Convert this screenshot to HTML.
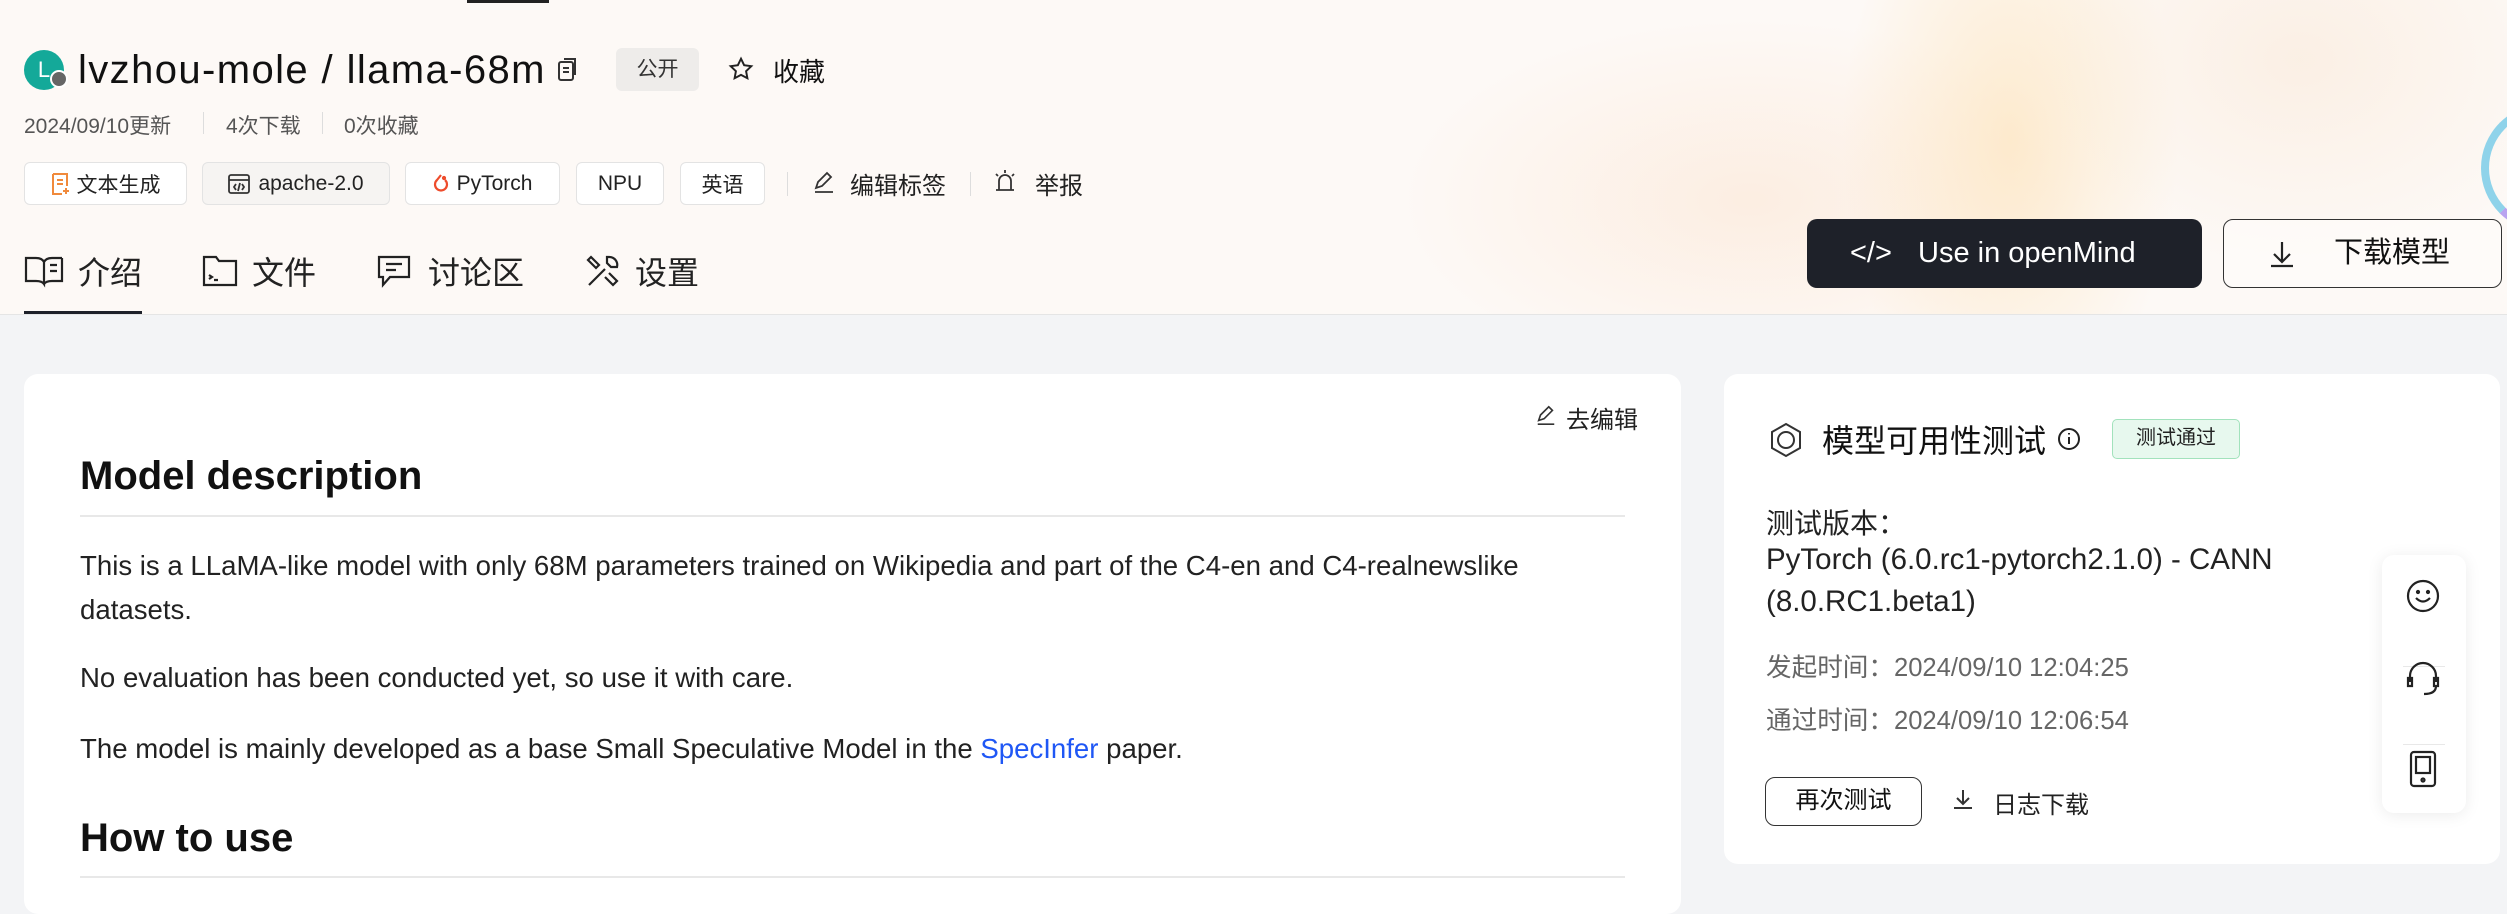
<!DOCTYPE html>
<html><head><meta charset="utf-8">
<style>
*{margin:0;padding:0;box-sizing:border-box}
body{width:2507px;height:890px;overflow:hidden;background:#f3f4f6;font-family:"Liberation Sans","Noto Sans CJK SC",sans-serif;color:#1a1a1a;position:relative}
.a{position:absolute;white-space:nowrap}
#hdr{position:absolute;left:0;top:0;width:2507px;height:315px;border-bottom:1px solid #e5e5e5;
background:
radial-gradient(ellipse 240px 420px at 2010px 140px,rgba(253,225,180,.6),rgba(253,225,180,0) 70%),
radial-gradient(ellipse 500px 260px at 1750px 200px,rgba(252,230,212,.6),rgba(252,230,212,0) 70%),
radial-gradient(ellipse 400px 300px at 2300px 60px,rgba(250,237,224,.8),rgba(250,237,224,0) 70%),
#fdf9f6;overflow:hidden}
.tag{position:absolute;top:162px;height:43px;border:1px solid #e3e3e3;border-radius:6px;background:#fff;font-size:21px;color:#222;display:flex;align-items:center;justify-content:center;gap:8px}
.sep{position:absolute;width:1px;background:#ddd}
.tab{position:absolute;top:248px;font-size:32px;color:#222;display:flex;align-items:center;gap:14px}
.card{position:absolute;background:#fff;border-radius:14px}
p.t{position:absolute;left:80px;font-size:27.6px;color:#222}
</style></head><body>
<div id="hdr">
  <div class="a" style="left:467px;top:0;width:82px;height:3px;background:#222"></div>
  <div class="a" style="left:2481px;top:104px;width:128px;height:128px;border-radius:50%;border:8px solid #8fd3ea;border-right-color:#c0a8f0;border-bottom-color:#b9a3f0"></div>
  <div class="a" style="left:24px;top:50px;width:40px;height:40px;border-radius:50%;background:#14a999;color:#fff;font-size:22px;line-height:40px;text-align:center">L</div>
  <div class="a" style="left:50px;top:70px;width:18px;height:18px;border-radius:50%;background:#666;border:2px solid #fff"></div>
  <div class="a" style="left:78px;top:48px;font-size:40px;color:#111;letter-spacing:1.4px">lvzhou-mole / llama-68m</div>
  <svg class="a" style="left:556px;top:56px" width="24" height="28" viewBox="0 0 24 28" fill="none" stroke="#333" stroke-width="2"><rect x="3" y="6" width="14" height="18" rx="2"/><path d="M8 3h11v16"/><path d="M7 12h6M7 16h6"/></svg>
  <div class="a" style="left:616px;top:48px;width:83px;height:43px;border-radius:6px;background:#eeecea;font-size:21px;line-height:43px;text-align:center;color:#333">公开</div>
  <svg class="a" style="left:728px;top:56px" width="26" height="26" viewBox="0 0 24 24" fill="none" stroke="#222" stroke-width="1.8"><path d="M12 2.5l2.9 6 6.6.9-4.8 4.6 1.2 6.5L12 17.4 6.1 20.5l1.2-6.5L2.5 9.4l6.6-.9z"/></svg>
  <div class="a" style="left:773px;top:52px;font-size:26px;color:#111">收藏</div>
  <div class="a" style="left:24px;top:110px;font-size:21px;color:#555">2024/09/10更新</div>
  <div class="sep" style="left:203px;top:112px;height:22px"></div>
  <div class="a" style="left:226px;top:110px;font-size:21px;color:#555">4次下载</div>
  <div class="sep" style="left:322px;top:112px;height:22px"></div>
  <div class="a" style="left:344px;top:110px;font-size:21px;color:#555">0次收藏</div>

  <div class="tag" style="left:24px;width:163px"><svg width="18" height="24" viewBox="0 0 18 24" fill="none" stroke="#f08a3c" stroke-width="2"><path d="M2 2h14v12M2 2v20h9"/><path d="M6 8h6M6 12h6M12 19h6M15 16v6"/></svg>文本生成</div>
  <div class="tag" style="left:202px;width:188px;background:#f6f4f2"><svg width="22" height="20" viewBox="0 0 22 20" fill="none" stroke="#333" stroke-width="1.8"><rect x="1" y="1" width="20" height="18" rx="2"/><path d="M1 6h20M8 10l-2 3 2 3M14 10l2 3-2 3M12 9l-2 8"/></svg>apache-2.0</div>
  <div class="tag" style="left:405px;width:155px"><svg width="16" height="22" viewBox="0 0 16 22" fill="none" stroke="#ee4c2c" stroke-width="2.2"><path d="M8 2L4 7a6 6 0 1 0 8 0"/><circle cx="11" cy="5" r="1" fill="#ee4c2c"/></svg>PyTorch</div>
  <div class="tag" style="left:576px;width:88px">NPU</div>
  <div class="tag" style="left:680px;width:85px">英语</div>
  <div class="sep" style="left:787px;top:172px;height:24px"></div>
  <svg class="a" style="left:812px;top:170px" width="24" height="24" viewBox="0 0 24 24" fill="none" stroke="#333" stroke-width="1.8"><path d="M4 18l2-6 9-9 4 4-9 9zM3 22h18"/></svg>
  <div class="a" style="left:850px;top:166px;font-size:24px;color:#222">编辑标签</div>
  <div class="sep" style="left:970px;top:172px;height:24px"></div>
  <svg class="a" style="left:993px;top:168px" width="24" height="26" viewBox="0 0 24 26" fill="none" stroke="#333" stroke-width="1.8"><path d="M6 22V13a6 6 0 0 1 12 0v9M3 22h18M12 2v3M3 6l2 2M21 6l-2 2"/></svg>
  <div class="a" style="left:1035px;top:166px;font-size:24px;color:#222">举报</div>

  <div class="tab" style="left:24px"><svg width="40" height="34" viewBox="0 0 40 34" fill="none" stroke="#222" stroke-width="2.2"><path d="M2 4h10q6 0 8 4v22q-2-3-8-3H2zM38 4H28q-6 0-8 4M38 4v23H28q-6 0-8 3"/><path d="M26 11h7M26 17h7"/></svg><span>介绍</span></div>
  <div class="tab" style="left:202px"><svg width="36" height="34" viewBox="0 0 36 34" fill="none" stroke="#222" stroke-width="2.2"><path d="M2 3h12l3 4h17v24H2z"/><path d="M7 21l3 2-3 2M12 26h4"/></svg><span>文件</span></div>
  <div class="tab" style="left:376px"><svg width="38" height="36" viewBox="0 0 38 36" fill="none" stroke="#222" stroke-width="2.2"><path d="M3 4h30v20H14l-7 8v-8H3z"/><path d="M10 11h16M10 17h10"/></svg><span>讨论区</span></div>
  <div class="tab" style="left:585px"><svg width="36" height="36" viewBox="0 0 36 36" fill="none" stroke="#222" stroke-width="2.2"><path d="M4 32L20 16M24 4a8 8 0 0 1 8 10l-6 0-4-4 0-6zM6 4l8 8-3 3-8-8zM20 24l8 8 4-4-8-8"/></svg><span>设置</span></div>
  <div class="a" style="left:24px;top:311px;width:118px;height:4px;background:#1e2129"></div>

  <div class="a" style="left:1807px;top:219px;width:395px;height:69px;border-radius:10px;background:#1e2129;color:#fff;font-size:29px;line-height:69px"><span style="position:absolute;left:43px">&lt;/&gt;</span><span style="position:absolute;left:111px">Use in openMind</span></div>
  <div class="a" style="left:2223px;top:219px;width:279px;height:69px;border-radius:10px;border:1.5px solid #333;background:rgba(255,255,255,.4);font-size:29px;line-height:66px;color:#111">
    <svg style="position:absolute;left:45px;top:20px" width="26" height="28" viewBox="0 0 26 28" fill="none" stroke="#222" stroke-width="2.2"><path d="M13 2v20M5 14l8 8 8-8M2 26h22"/></svg>
    <span style="position:absolute;left:110px">下载模型</span></div>
</div>

<div class="card" style="left:24px;top:374px;width:1657px;height:540px"></div>
<svg class="a" style="left:1535px;top:404px" width="22" height="22" viewBox="0 0 24 24" fill="none" stroke="#333" stroke-width="1.8"><path d="M4 18l2-6 9-9 4 4-9 9zM3 22h18"/></svg>
<div class="a" style="left:1566px;top:400px;font-size:24px;color:#222">去编辑</div>
<div class="a" style="left:80px;top:454px;font-size:40px;font-weight:bold;color:#111">Model description</div>
<div class="a" style="left:80px;top:515px;width:1545px;height:2px;background:#e8e8e8"></div>
<p class="t a" style="top:550px">This is a LLaMA-like model with only 68M parameters trained on Wikipedia and part of the C4-en and C4-realnewslike</p>
<p class="t a" style="top:594px">datasets.</p>
<p class="t a" style="top:662px">No evaluation has been conducted yet, so use it with care.</p>
<p class="t a" style="top:733px">The model is mainly developed as a base Small Speculative Model in the <span style="color:#1f57f5">SpecInfer</span> paper.</p>
<div class="a" style="left:80px;top:816px;font-size:40px;font-weight:bold;color:#111">How to use</div>
<div class="a" style="left:80px;top:876px;width:1545px;height:2px;background:#e8e8e8"></div>

<div class="card" style="left:1724px;top:374px;width:776px;height:490px"></div>
<svg class="a" style="left:1768px;top:422px" width="36" height="36" viewBox="0 0 36 36" fill="none" stroke="#333" stroke-width="2"><path d="M18 2l14 8v16l-14 8-14-8V10z"/><circle cx="18" cy="18" r="8"/></svg>
<div class="a" style="left:1822px;top:416px;font-size:32px;color:#111">模型可用性测试</div>
<svg class="a" style="left:2057px;top:427px" width="24" height="24" viewBox="0 0 24 24" fill="none" stroke="#222" stroke-width="2"><circle cx="12" cy="12" r="10"/><path d="M12 10v7M12 6v1.5"/></svg>
<div class="a" style="left:2112px;top:419px;width:128px;height:40px;border:1.5px solid #a2e2bc;border-radius:5px;background:#e7f8ee;font-size:20px;line-height:37px;text-align:center;color:#222">测试通过</div>
<div class="a" style="left:1766px;top:502px;font-size:28px;color:#222">测试版本：</div>
<div class="a" style="left:1766px;top:543px;font-size:29.5px;color:#222">PyTorch (6.0.rc1-pytorch2.1.0) - CANN</div>
<div class="a" style="left:1766px;top:585px;font-size:29.5px;color:#222">(8.0.RC1.beta1)</div>
<div class="a" style="left:1766px;top:647px;font-size:25.6px;color:#666">发起时间：2024/09/10 12:04:25</div>
<div class="a" style="left:1766px;top:700px;font-size:25.6px;color:#666">通过时间：2024/09/10 12:06:54</div>
<div class="a" style="left:1765px;top:777px;width:157px;height:49px;border:1.5px solid #333;border-radius:10px;font-size:24px;line-height:46px;text-align:center;color:#111">再次测试</div>
<svg class="a" style="left:1953px;top:788px" width="20" height="22" viewBox="0 0 20 22" fill="none" stroke="#333" stroke-width="2"><path d="M10 2v14M4 10l6 6 6-6M1 20h18"/></svg>
<div class="a" style="left:1993px;top:785px;font-size:24px;color:#222">日志下载</div>

<div class="a" style="left:2382px;top:555px;width:84px;height:258px;border-radius:12px;background:#fff;box-shadow:0 2px 16px rgba(0,0,0,.08)"></div>
<div class="a" style="left:2403px;top:666px;width:42px;height:1px;background:#e8e8e8"></div>
<div class="a" style="left:2403px;top:744px;width:42px;height:1px;background:#e8e8e8"></div>
<svg class="a" style="left:2405px;top:578px" width="36" height="36" viewBox="0 0 36 36" fill="none" stroke="#222" stroke-width="2.2"><circle cx="18" cy="18" r="15"/><path d="M11 20q7 7 14 0"/><circle cx="13" cy="14" r="1" fill="#222"/><circle cx="23" cy="14" r="1" fill="#222"/></svg>
<svg class="a" style="left:2405px;top:660px" width="36" height="40" viewBox="0 0 36 40" fill="none" stroke="#222" stroke-width="2.2"><path d="M5 22v-6a13 13 0 0 1 26 0v6M3 18h4v8H3zM29 18h4v8h-4zM31 26q0 8-12 8"/></svg>
<svg class="a" style="left:2407px;top:750px" width="32" height="38" viewBox="0 0 32 38" fill="none" stroke="#222" stroke-width="2.2"><rect x="4" y="2" width="24" height="34" rx="3"/><rect x="9" y="7" width="14" height="16"/><circle cx="16" cy="30" r="1.5"/></svg>
</body></html>
